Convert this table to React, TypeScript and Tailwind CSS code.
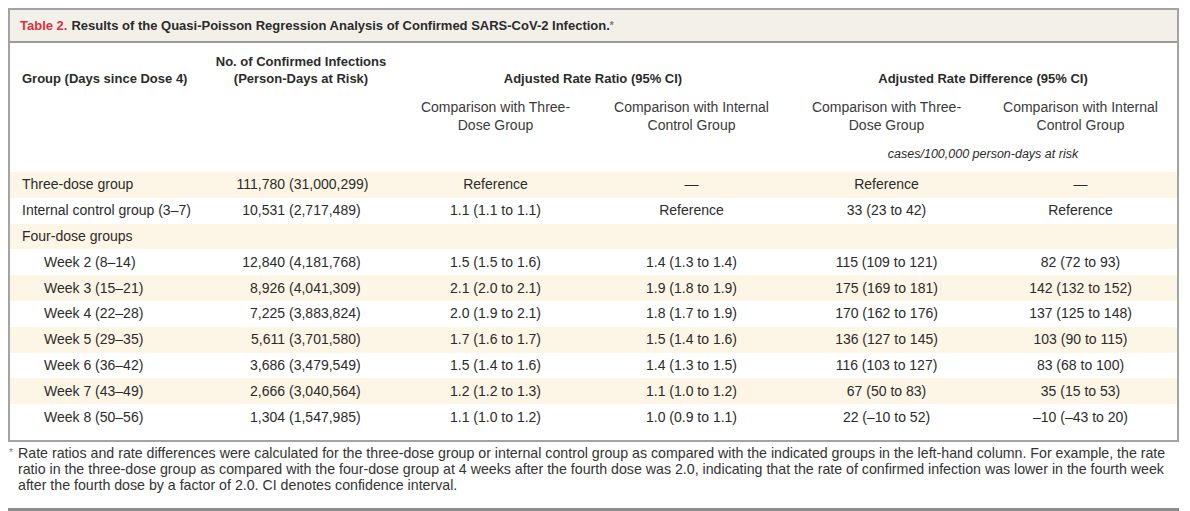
import React from 'react';

interface Row {
    label: string;
    indent?: boolean;
    shaded: boolean;
    n?: string;
    risk?: string;
    rr3?: string;
    rrI?: string;
    rd3?: string;
    rdI?: string;
}

const rows: Row[] = [
    { label: 'Three-dose group', shaded: true, n: '111,780', risk: '31,000,299', rr3: 'Reference', rrI: '—', rd3: 'Reference', rdI: '—' },
    { label: 'Internal control group (3–7)', shaded: false, n: '10,531', risk: '2,717,489', rr3: '1.1 (1.1 to 1.1)', rrI: 'Reference', rd3: '33 (23 to 42)', rdI: 'Reference' },
    { label: 'Four-dose groups', shaded: true },
    { label: 'Week 2 (8–14)', indent: true, shaded: false, n: '12,840', risk: '4,181,768', rr3: '1.5 (1.5 to 1.6)', rrI: '1.4 (1.3 to 1.4)', rd3: '115 (109 to 121)', rdI: '82 (72 to 93)' },
    { label: 'Week 3 (15–21)', indent: true, shaded: true, n: '8,926', risk: '4,041,309', rr3: '2.1 (2.0 to 2.1)', rrI: '1.9 (1.8 to 1.9)', rd3: '175 (169 to 181)', rdI: '142 (132 to 152)' },
    { label: 'Week 4 (22–28)', indent: true, shaded: false, n: '7,225', risk: '3,883,824', rr3: '2.0 (1.9 to 2.1)', rrI: '1.8 (1.7 to 1.9)', rd3: '170 (162 to 176)', rdI: '137 (125 to 148)' },
    { label: 'Week 5 (29–35)', indent: true, shaded: true, n: '5,611', risk: '3,701,580', rr3: '1.7 (1.6 to 1.7)', rrI: '1.5 (1.4 to 1.6)', rd3: '136 (127 to 145)', rdI: '103 (90 to 115)' },
    { label: 'Week 6 (36–42)', indent: true, shaded: false, n: '3,686', risk: '3,479,549', rr3: '1.5 (1.4 to 1.6)', rrI: '1.4 (1.3 to 1.5)', rd3: '116 (103 to 127)', rdI: '83 (68 to 100)' },
    { label: 'Week 7 (43–49)', indent: true, shaded: true, n: '2,666', risk: '3,040,564', rr3: '1.2 (1.2 to 1.3)', rrI: '1.1 (1.0 to 1.2)', rd3: '67 (50 to 83)', rdI: '35 (15 to 53)' },
    { label: 'Week 8 (50–56)', indent: true, shaded: false, n: '1,304', risk: '1,547,985', rr3: '1.1 (1.0 to 1.2)', rrI: '1.0 (0.9 to 1.1)', rd3: '22 (–10 to 52)', rdI: '–10 (–43 to 20)' },
];

const cols = 'grid grid-cols-[195px_192px_197px_195px_195px_1fr]';

export default function App() {
    return (
        <div className="w-[1190px] h-[511px] bg-white text-[#2b2b2b] text-[14px] overflow-hidden" style={{ fontFamily: '"Liberation Sans", Arial, sans-serif' }}>
            {/* table box */}
            <div className="ml-[8px] mt-[8px] w-[1171px] border-2 border-[#a3a3a3]">
                {/* title band */}
                <div className="h-[33px] bg-[#f3f0ea] border-b-2 border-[#9a9a9a] flex items-center pl-[10px] font-bold text-[13px]">
                    <span className="text-[#d8323f]">Table 2.</span>
                    <span className="ml-[4px]">Results of the Quasi-Poisson Regression Analysis of Confirmed SARS-CoV-2 Infection.</span>
                    <span className="text-[10px] self-start mt-[8px] text-[#777]">*</span>
                </div>

                {/* header */}
                <div className={`${cols} pt-[10px] font-bold text-[13px] leading-[17px] items-end`}>
                    <div className="pl-[12px]">Group (Days since Dose 4)</div>
                    <div className="text-center">No. of Confirmed Infections<br />(Person-Days at Risk)</div>
                    <div className="col-span-2 text-center">Adjusted Rate Ratio (95% CI)</div>
                    <div className="col-span-2 text-center">Adjusted Rate Difference (95% CI)</div>
                </div>
                <div className={`${cols} mt-[11px] leading-[18px] text-[#3a3a3a]`}>
                    <div />
                    <div />
                    <div className="text-center">Comparison with Three-<br />Dose Group</div>
                    <div className="text-center">Comparison with Internal<br />Control Group</div>
                    <div className="text-center">Comparison with Three-<br />Dose Group</div>
                    <div className="text-center">Comparison with Internal<br />Control Group</div>
                </div>
                <div className={`${cols} mt-[12px] leading-[16px]`}>
                    <div className="col-start-5 col-span-2 text-center italic text-[12.5px]">cases/100,000 person-days at risk</div>
                </div>

                {/* body */}
                <div className="mt-[10px] mb-[10px]">
                    {rows.map(r => (
                        <div key={r.label} className={`${cols} h-[25.8px] items-center ${r.shaded ? 'bg-[#fdf5e6]' : 'bg-white'}`}>
                            <div className={r.indent ? 'pl-[34px]' : 'pl-[12px]'}>{r.label}</div>
                            <div className="flex">
                                {r.n && (
                                    <>
                                        <span className="w-[80px] text-right">{r.n}</span>
                                        <span className="pl-[4px]">({r.risk})</span>
                                    </>
                                )}
                            </div>
                            <div className="text-center">{r.rr3}</div>
                            <div className="text-center">{r.rrI}</div>
                            <div className="text-center">{r.rd3}</div>
                            <div className="text-center">{r.rdI}</div>
                        </div>
                    ))}
                </div>
            </div>

            {/* footnote */}
            <div className="ml-[8px] w-[1171px] mt-[3px] flex text-[14.2px] leading-[16px] text-[#333]">
                <span className="w-[10px] pl-[1px] text-[10px] shrink-0 text-[#777]">*</span>
                <p className="leading-[16px]">
                    Rate ratios and rate differences were calculated for the three-dose group or internal control group as compared with the indicated groups in the left-hand column. For example, the rate<br />
                    ratio in the three-dose group as compared with the four-dose group at 4 weeks after the fourth dose was 2.0, indicating that the rate of confirmed infection was lower in the fourth week<br />
                    after the fourth dose by a factor of 2.0. CI denotes confidence interval.
                </p>
            </div>
            <div className="ml-[8px] w-[1171px] mt-[15px] h-[3px] bg-[#8c8c8c]" />
        </div>
    );
}
